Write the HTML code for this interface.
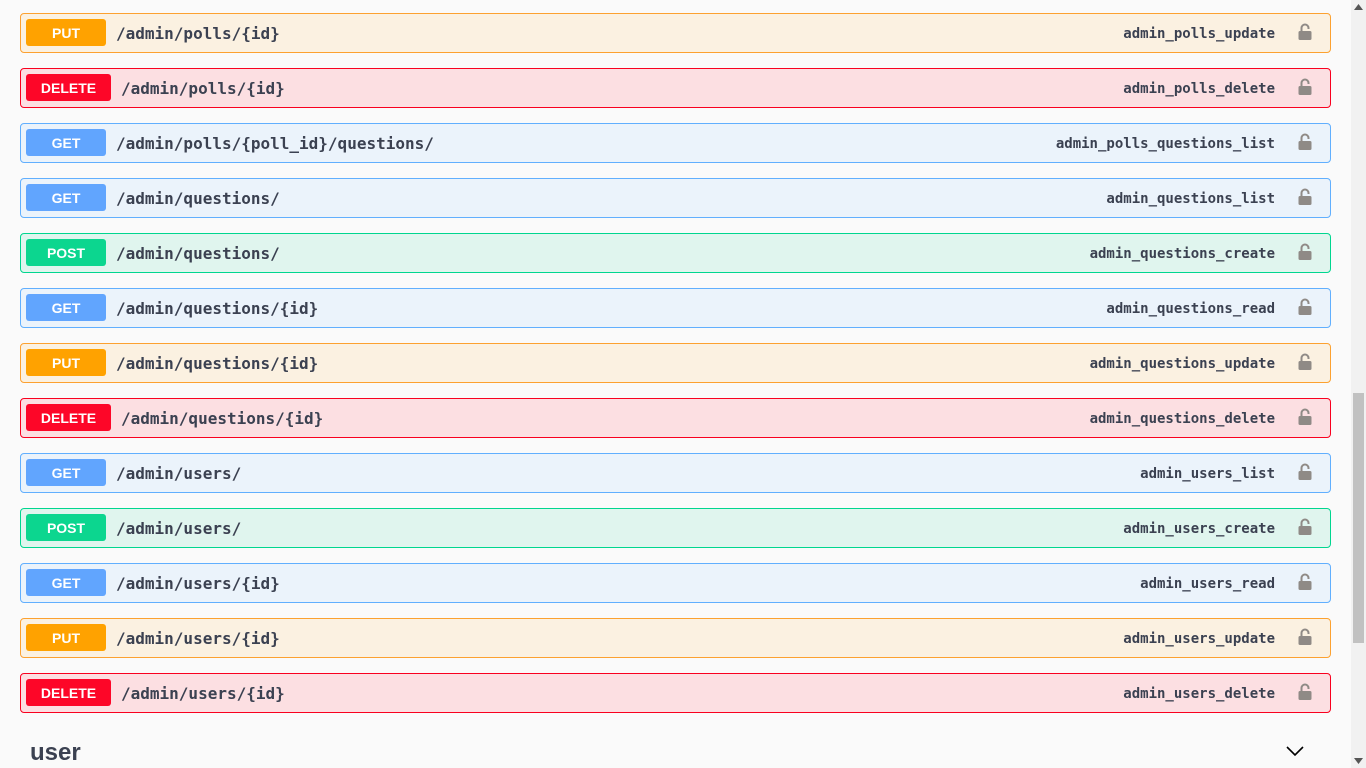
<!DOCTYPE html>
<html><head><style>
body{margin:0;background:#fafafa;width:1366px;height:768px;overflow:hidden;position:relative;font-family:"Liberation Sans",sans-serif}
.op{position:absolute;left:20px;width:1309px;height:38px;border:1px solid;border-radius:4px;box-sizing:content-box}
.b{position:absolute;left:5px;top:5px;height:27px;width:80px;border-radius:3px;color:#fff;font-weight:bold;font-size:14px;line-height:28px;text-align:center}
.p{position:absolute;left:95px;top:1px;line-height:38px;font-family:"DejaVu Sans Mono",monospace;font-weight:bold;font-size:16px;color:#3b4151}
.id{position:absolute;right:55px;top:1px;line-height:38px;font-family:"DejaVu Sans Mono",monospace;font-weight:bold;font-size:14px;color:#3b4151}
.lk{position:absolute;right:18px;top:9px}
.put{border-color:#fca130;background:#fbf1e1}.put .b{background:#ffa200}
.del{border-color:#f9001f;background:#fcdfe2}.del .b{background:#fd0628;width:85px}.del .p{left:100px}
.get{border-color:#61affe;background:#ebf3fb}.get .b{background:#61a5fe}
.post{border-color:#00d68f;background:#e0f5ee}.post .b{background:#0cd68f}
.sb{position:absolute;right:0;top:0;width:15px;height:768px;background:#f1f1f1}
.th{position:absolute;left:2px;top:393px;width:11px;height:250px;background:#c1c1c1}
</style></head><body>
<div id="c"></div>
<div style="position:absolute;left:30px;top:739px;font-size:24px;font-weight:bold;color:#3b4151">user</div>
<svg style="position:absolute;left:1286px;top:745px" width="18" height="12" viewBox="0 0 18 12"><path d="M1 2l8 8 8-8" stroke="#000" stroke-width="1.6" fill="none"/></svg>
<div class="sb"><div class="th"></div>
<svg style="position:absolute;left:3px;top:4px" width="9" height="6"><path d="M0 6L4.5 0 9 6z" fill="#555"/></svg>
<svg style="position:absolute;left:3px;top:758px" width="9" height="6"><path d="M0 0L4.5 6 9 0z" fill="#555"/></svg></div>
<script>
var r=[["put","PUT","/admin/polls/{id}","admin_polls_update"],["del","DELETE","/admin/polls/{id}","admin_polls_delete"],["get","GET","/admin/polls/{poll_id}/questions/","admin_polls_questions_list"],["get","GET","/admin/questions/","admin_questions_list"],["post","POST","/admin/questions/","admin_questions_create"],["get","GET","/admin/questions/{id}","admin_questions_read"],["put","PUT","/admin/questions/{id}","admin_questions_update"],["del","DELETE","/admin/questions/{id}","admin_questions_delete"],["get","GET","/admin/users/","admin_users_list"],["post","POST","/admin/users/","admin_users_create"],["get","GET","/admin/users/{id}","admin_users_read"],["put","PUT","/admin/users/{id}","admin_users_update"],["del","DELETE","/admin/users/{id}","admin_users_delete"]];
var h="";r.forEach(function(x,i){h+='<div class="op '+x[0]+'" style="top:'+(13+55*i)+'px"><div class="b">'+x[1]+'</div><div class="p">'+x[2]+'</div><div class="id">'+x[3]+'</div><svg class="lk" width="14" height="18" viewBox="0 0 14 18"><path d="M3.5 8V5a3.5 3.5 0 0 1 7 0v1" stroke="#8f8a86" stroke-width="2" fill="none"/><rect x="0.5" y="8" width="13" height="9" rx="1.5" fill="#8f8a86"/></svg></div>'});
document.getElementById("c").innerHTML=h;
</script>
</body></html>
